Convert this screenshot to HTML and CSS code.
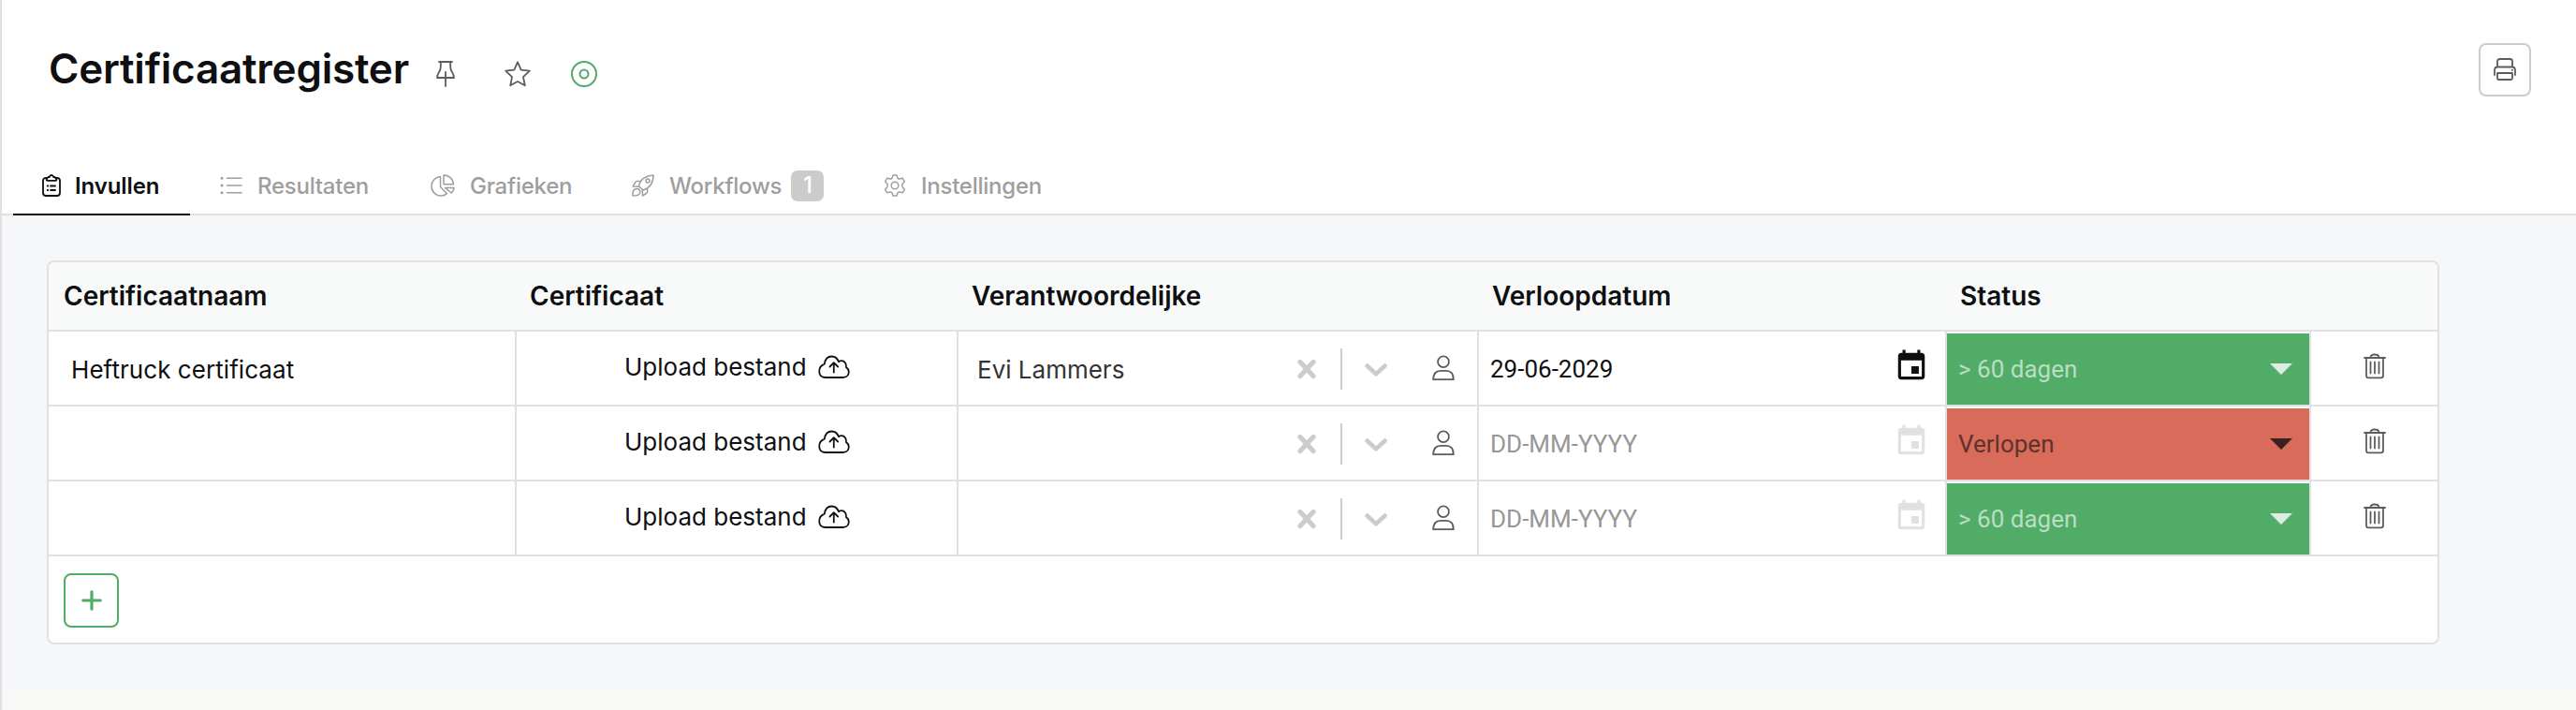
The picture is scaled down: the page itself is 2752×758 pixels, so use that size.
FILE: index.html
```html
<!DOCTYPE html>
<html lang="nl">

<head>
    <meta charset="UTF-8">
    <meta name="viewport" content="width=device-width, initial-scale=1.0">
    <title>Certificaatregister</title>
    <link rel="stylesheet" href="styles.css">
</head>

<body>
    <!-- Iconen -->
    <svg class="sprite">
        <symbol id="cloud" viewBox="0 0 34 26">
            <path d="M8 24h18.500c3.500 0 6.300-2.300 6.300-5.800 0-2.200-1-4-2.800-5 .5-4-1.800-7-5-7-1.200 0-2.200.3-3 1C20.500 3.500 17.500 1.500 14.500 1.500 10 1.500 7.500 4.800 6.800 9.700 3.300 11 1.200 13.800 1.200 17.500 1.200 21.500 4 24 8 24zM16.800 18.500V8.500M12.500 12.500l4.300-4.300 4.300 4.300" />
        </symbol>
        <symbol id="cross" viewBox="0 0 20 22">
            <path d="M3 3.500 17 18.500M17 3.500 3 18.500" />
        </symbol>
        <symbol id="chevron" viewBox="0 0 24 14">
            <path d="M2.500 2.500 12 11.300 21.500 2.500" />
        </symbol>
        <symbol id="person" viewBox="0 0 24 28">
            <circle cx="12" cy="7.300" r="5.900" />
            <path d="M1.200 26.200h21.600c0-6-2.800-9.300-7.800-9.300H9c-5 0-7.800 3.300-7.800 9.300z" />
        </symbol>
        <symbol id="calendar" viewBox="0 0 24 24">
            <path d="M17 12h-5v5h5v-5zM16 1v2H8V1H6v2H5c-1.110 0-2 .9-2 2v14c0 1.100.89 2 2 2h14c1.100 0 2-.9 2-2V5c0-1.100-.9-2-2-2h-1V1h-2zm3 18H5V8h14v11z" />
        </symbol>
        <symbol id="arrow" viewBox="0 0 24 12">
            <path d="M0 0h24L12 12z" />
        </symbol>
        <symbol id="trash" viewBox="0 0 24 28">
            <path d="M1 5h22M7.500 4.800C7.500 2.500 9 1.500 12 1.500s4.500 1 4.500 3.300M3 5v19c0 1.500.8 2.300 2.300 2.300h13.400c1.500 0 2.300-.8 2.300-2.300V5M7.500 9.500v12M12 9.500v12M16.500 9.500v12" />
        </symbol>
    </svg>

    <header>
        <div class="title-row">
            <h1>Certificaatregister</h1>
            <svg class="icon pin" viewBox="0 0 20 28">
                <path d="M3 1h14M4.800 1v5.500c0 2-.6 4-2 6C1.500 14.300 1 15.800 1 18h18c0-2.200-.5-3.700-1.800-5.500-1.400-2-2-4-2-6V1M10 12v15" />
            </svg>
            <svg class="icon star" viewBox="0 0 28 28">
                <path d="M14 1.300 17.700 9.700 26.800 10.600 20 17.100 21.800 26.300 14 22 6.200 26.300 8 17.100 1.200 10.600 10.300 9.700z" />
            </svg>
            <svg class="icon target" viewBox="0 0 28 28">
                <circle cx="14" cy="14" r="13" />
                <circle cx="14" cy="14" r="4.500" />
            </svg>
            <button class="print">
                <svg class="icon" viewBox="0 0 24 24">
                    <path d="M4 9.500V3.500C4 2 5 1 6.500 1h11C19 1 20 2 20 3.500v6M1 18v-5c0-2.300 1.200-3.500 3.500-3.500h15c2.300 0 3.500 1.200 3.500 3.500v5M4 16h16v5.500c0 1-.5 1.500-1.500 1.500h-13C4.500 23 4 22.500 4 21.500zM19.500 12.800h.6" />
                </svg>
            </button>
        </div>

        <nav>
            <a class="tab active">
                <svg class="icon" viewBox="0 0 24 24">
                    <path d="M7 3.800H6.200c-2 0-3.200 1-3.200 3V20c0 2 1.200 3 3.200 3h11.600c2 0 3.200-1 3.200-3V6.800c0-2-1.200-3-3.200-3H17M6.500 5.800 8.500 3h1.300c.4-1.300 1.200-2 2.200-2s1.800.7 2.200 2h1.300l2 2.800c-.4.8-1 1-1.700 1H8.200c-.7 0-1.300-.2-1.700-1zM11 12.500h5M11 17h5M7.700 12.500h.5M7.700 17h.5" />
                </svg>
                <span>Invullen</span>
            </a>
            <a class="tab results">
                <svg class="icon" viewBox="0 0 24 24">
                    <path d="M7.500 4.300H23M7.500 12H23M7.500 19.700H23" />
                    <path class="dots" d="M2 4.300h.1M2 12h.1M2 19.700h.1" />
                </svg>
                <span>Resultaten</span>
            </a>
            <a class="tab charts">
                <svg class="icon" viewBox="0 0 26 24">
                    <path d="M10.500 2.500C5 3 1 7.300 1 12.700 1 18.500 5.500 23 11 23c2.400 0 4.600-.8 6.400-2.200l-6.900-7.300zM14 1v9.800h10.300C24.300 5 20 1 14 1zM15.500 14.500H25c-.2 2.300-1 4-2.700 5.500z" />
                </svg>
                <span>Grafieken</span>
            </a>
            <a class="tab workflows">
                <svg class="icon" viewBox="0 0 24 24">
                    <path d="M7.200 12.500C9 6.500 14 1.500 23 1c0 8.500-4.500 14-11 16zM9 7.500H5.500c-1 0-1.600.4-2 1.300L1.200 13l6 .2M16.700 14.500v4c0 1-.4 1.600-1.300 2L11.500 23l-.3-6M1 23c-.4-5 1.300-7.500 4.300-7.500 2.200 0 3.500 1.500 3.500 3.400C8.800 21.500 6 23 1 23z" />
                    <circle cx="17" cy="7" r="2" />
                </svg>
                <span>Workflows</span>
                <span class="badge">1</span>
            </a>
            <a class="tab settings">
                <svg class="icon" viewBox="0 0 24 24">
                    <path d="M10 1h4l.9 2.900q.6 1.400 2.100 1.100l3.200-.8 2.200 3.600-2.200 2.300q-1 1.900 0 3.800l2.200 2.300-2.200 3.600-3.200-.8q-1.500-.3-2.100 1.100L14 23h-4l-.9-2.900q-.6-1.400-2.100-1.100l-3.200.8-2.200-3.600 2.200-2.300q1-1.900 0-3.800L1.600 7.800l2.200-3.600L7 5q1.500.3 2.100-1.100z" />
                    <circle cx="12" cy="12" r="3.800" />
                </svg>
                <span>Instellingen</span>
            </a>
        </nav>
    </header>

    <main>
        <div class="card">
            <table>
                <colgroup>
                    <col class="col-name">
                    <col class="col-file">
                    <col class="col-owner">
                    <col class="col-date">
                    <col class="col-status">
                    <col>
                </colgroup>
                <thead>
                    <tr>
                        <th>Certificaatnaam</th>
                        <th>Certificaat</th>
                        <th>Verantwoordelijke</th>
                        <th>Verloopdatum</th>
                        <th>Status</th>
                        <th></th>
                    </tr>
                </thead>
                <tbody>
                    <tr>
                        <td class="name">Heftruck certificaat</td>
                        <td>
                            <div class="upload"><span>Upload bestand</span><svg><use href="#cloud" /></svg></div>
                        </td>
                        <td>
                            <div class="owner">
                                <span>Evi Lammers</span>
                                <svg class="cross"><use href="#cross" /></svg>
                                <i class="divider"></i>
                                <svg class="chevron"><use href="#chevron" /></svg>
                                <svg class="person"><use href="#person" /></svg>
                            </div>
                        </td>
                        <td>
                            <div class="date"><span>29-06-2029</span><svg><use href="#calendar" /></svg></div>
                        </td>
                        <td>
                            <div class="status valid"><span>&gt; 60 dagen</span><svg><use href="#arrow" /></svg></div>
                        </td>
                        <td class="remove"><svg><use href="#trash" /></svg></td>
                    </tr>
                    <tr>
                        <td class="name"></td>
                        <td>
                            <div class="upload"><span>Upload bestand</span><svg><use href="#cloud" /></svg></div>
                        </td>
                        <td>
                            <div class="owner">
                                <span></span>
                                <svg class="cross"><use href="#cross" /></svg>
                                <i class="divider"></i>
                                <svg class="chevron"><use href="#chevron" /></svg>
                                <svg class="person"><use href="#person" /></svg>
                            </div>
                        </td>
                        <td>
                            <div class="date empty"><span>DD-MM-YYYY</span><svg><use href="#calendar" /></svg></div>
                        </td>
                        <td>
                            <div class="status expired"><span>Verlopen</span><svg><use href="#arrow" /></svg></div>
                        </td>
                        <td class="remove"><svg><use href="#trash" /></svg></td>
                    </tr>
                    <tr>
                        <td class="name"></td>
                        <td>
                            <div class="upload"><span>Upload bestand</span><svg><use href="#cloud" /></svg></div>
                        </td>
                        <td>
                            <div class="owner">
                                <span></span>
                                <svg class="cross"><use href="#cross" /></svg>
                                <i class="divider"></i>
                                <svg class="chevron"><use href="#chevron" /></svg>
                                <svg class="person"><use href="#person" /></svg>
                            </div>
                        </td>
                        <td>
                            <div class="date empty"><span>DD-MM-YYYY</span><svg><use href="#calendar" /></svg></div>
                        </td>
                        <td>
                            <div class="status valid"><span>&gt; 60 dagen</span><svg><use href="#arrow" /></svg></div>
                        </td>
                        <td class="remove"><svg><use href="#trash" /></svg></td>
                    </tr>
                </tbody>
            </table>
            <div class="add-row">
                <button class="add">
                    <svg viewBox="0 0 22 22">
                        <path d="M11 1.800v18.400M1.800 11h18.400" />
                    </svg>
                </button>
            </div>
        </div>
    </main>
</body>

</html>
```
FILE: styles.css
```css
* {
    padding: 0;
    margin: 0;
    box-sizing: border-box;
}

body {
    height: 758px;
    border-left: 2px solid #e1e1e3;
    background-color: #f8f9f7;
    font-family: Inter, 'Liberation Sans', sans-serif;
    font-size: 26px;
    color: #0f0f11;
    overflow: hidden;
}

svg {
    display: block;
    flex: none;
    fill: none;
    stroke: currentColor;
    stroke-width: 1.8;
    stroke-linecap: round;
    stroke-linejoin: round;
}

button {
    display: flex;
    align-items: center;
    justify-content: center;
    background-color: #ffffff;
    border-radius: 8px;
}

.sprite {
    display: none;
}

/* Kop */
header {
    display: flex;
    flex-direction: column;
    justify-content: space-between;
    height: 230px;
    background-color: #ffffff;
    border-bottom: 2px solid #e1e1e3;
}

.title-row {
    display: flex;
    align-items: center;
    height: 58px;
    margin-top: 45px;
    padding: 0 48px 0 50px;
}

h1 {
    width: 414px;
    padding-bottom: 2px;
    font-size: 44px;
    font-weight: 600;
    letter-spacing: -0.22px;
    line-height: 56px;
    white-space: nowrap;
}

.title-row .icon {
    color: #5c5c5e;
}

.title-row .pin {
    width: 20px;
    height: 28px;
    margin-top: 10px;
}

.title-row .star {
    width: 28px;
    height: 28px;
    margin: 10px 43px 0 53px;
}

.title-row .target {
    width: 28px;
    height: 28px;
    margin-top: 9px;
    color: #4fab66;
    stroke-width: 2;
}

.print {
    width: 56px;
    height: 57px;
    margin-left: auto;
    border: 2px solid #cccccc;
}

.print .icon {
    width: 24px;
    height: 24px;
}

/* Tabbladen */
nav {
    display: flex;
    height: 76px;
    margin-bottom: -2px;
    padding-left: 12px;
    font-size: 24px;
    font-weight: 500;
    letter-spacing: -0.25px;
    color: #9e9e9e;
}

.tab {
    display: flex;
    align-items: center;
    height: 76px;
    padding-top: 12px;
    white-space: nowrap;
}

.tab .icon {
    width: 24px;
    height: 24px;
    margin-right: 16px;
    stroke-width: 1.5;
}

.tab .dots {
    stroke-width: 3;
}

.tab.active {
    width: 189px;
    padding-left: 29px;
    padding-top: 14px;
    border-bottom: 2px solid #0f0f11;
    color: #0f0f11;
    font-weight: 600;
    letter-spacing: -0.1px;
}

.tab.active .icon {
    margin-right: 13px;
    stroke-width: 1.8;
}

.results {
    width: 225px;
    margin-left: 32px;
}

.charts {
    width: 215px;
}

.charts .icon {
    width: 26px;
}

.workflows {
    width: 269px;
}

.badge {
    width: 35px;
    height: 33px;
    margin-left: 10px;
    border-radius: 7px;
    background-color: #cbcbcb;
    color: #ffffff;
    line-height: 32px;
    text-align: center;
}

/* Tabel */
main {
    height: 506px;
    padding: 48px;
    background-color: #f6f7f9;
}

.card {
    width: 2556px;
    height: 410px;
    border: 2px solid #e1e1e3;
    border-radius: 8px;
    background-color: #ffffff;
    overflow: hidden;
}

table {
    width: 2552px;
    table-layout: fixed;
    border-spacing: 0;
}

.col-name {
    width: 500px;
}

.col-file {
    width: 472px;
}

.col-owner {
    width: 556px;
}

.col-date {
    width: 500px;
}

.col-status {
    width: 389px;
}

th {
    height: 74px;
    padding: 0 0 1px 14px;
    border-bottom: 2px solid #e1e1e3;
    background-color: #f8faf9;
    font-size: 28px;
    font-weight: 600;
    text-align: left;
}

th:first-child {
    padding-left: 16px;
}

td {
    height: 80px;
    border-right: 2px solid #e1e1e3;
    border-bottom: 2px solid #e1e1e3;
}

td:last-child {
    border-right: none;
}

.name {
    padding: 2px 0 0 24px;
    letter-spacing: 0.06px;
}

.upload {
    display: flex;
    align-items: center;
    height: 78px;
    padding: 0 0 3px 115px;
}

.upload svg {
    width: 34px;
    height: 26px;
    margin: 1px 0 0 12px;
}

.owner {
    display: flex;
    align-items: center;
    height: 78px;
    padding-left: 20px;
    color: #cccccc;
}

.owner span {
    width: 342px;
    padding-top: 2px;
    color: #333335;
}

.owner .cross {
    width: 20px;
    height: 22px;
    margin-top: 2px;
    stroke-width: 5.2;
}

.owner .divider {
    width: 2px;
    height: 44px;
    margin: 2px 24px 0 26px;
    background-color: #cccccc;
}

.owner .chevron {
    width: 24px;
    height: 14px;
    margin-top: 4px;
    stroke-width: 4.5;
}

.owner .person {
    width: 24px;
    height: 28px;
    margin-left: 48px;
    color: #5c5c5e;
}

.date {
    display: flex;
    align-items: center;
    justify-content: space-between;
    height: 78px;
    padding: 0 17px 0 12px;
    font-family: Roboto, sans-serif;
}

.date span {
    padding-top: 2px;
}

.date svg {
    width: 38px;
    height: 38px;
    margin-bottom: 4px;
    fill: currentColor;
    stroke: none;
}

.date.empty {
    color: #e1e1e1;
}

.date.empty span {
    color: #979797;
}

.status {
    display: flex;
    align-items: center;
    justify-content: space-between;
    height: 76px;
    margin-top: 2px;
    padding: 0 18px 0 12px;
    font-family: Roboto, sans-serif;
}

.status svg {
    width: 24px;
    height: 12px;
    fill: currentColor;
    stroke: none;
}

.status.valid {
    background-color: #51ac68;
    color: #dceee0;
}

.status.valid span {
    color: #b9dec2;
}

.status.expired {
    background-color: #d96b5a;
    color: #3b211e;
}

.status.expired span {
    color: #5d332d;
}

.remove svg {
    width: 24px;
    height: 28px;
    margin: 0 auto 4px 56px;
    color: #5c5c5e;
}

.add-row {
    padding: 18px 16px;
}

.add {
    width: 59px;
    height: 58px;
    border: 2px solid #4fab66;
    color: #4fab66;
}

.add svg {
    width: 22px;
    height: 22px;
    stroke-width: 3.2;
}
```
